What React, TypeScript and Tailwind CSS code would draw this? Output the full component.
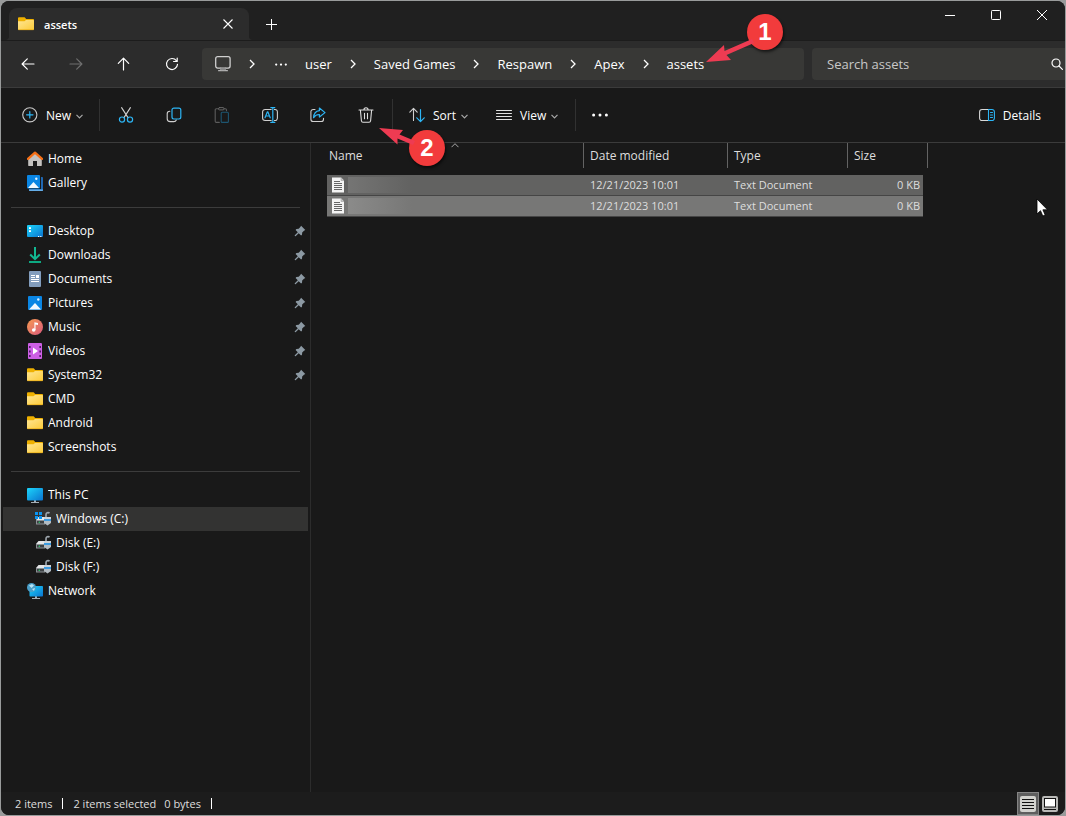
import { useState } from "react";
import type { ReactNode } from "react";

interface SidebarItem {
  label: string;
  icon: ReactNode;
  pinned?: boolean;
  nested?: boolean;
  active?: boolean;
}

interface FileRow {
  id: number;
  modified: string;
  type: string;
  size: string;
}

const BLUE = "#2cb5f5";

const Icon = ({ children, className = "size-4" }: { children: ReactNode; className?: string }) => (
  <svg
    viewBox="0 0 16 16"
    className={`${className} shrink-0`}
    fill="none"
    stroke="currentColor"
    strokeLinecap="round"
    strokeLinejoin="round"
    aria-hidden="true"
  >
    {children}
  </svg>
);

/* Toolbar and navigation glyphs */

const ArrowLeft = () => (
  <Icon><path d="M14 8H2.2M7.3 2.8 2.1 8l5.2 5.2" strokeWidth="1.2" /></Icon>
);
const ArrowRight = () => (
  <Icon><path d="M2 8h11.8M8.7 2.8 13.9 8l-5.2 5.2" strokeWidth="1.2" /></Icon>
);
const ArrowUp = () => (
  <Icon><path d="M7.500 14V2.2M2.300 7.3 7.500 2.1l5.2 5.2" strokeWidth="1.2" /></Icon>
);
const Refresh = () => (
  <Icon>
    <path d="M13.5 8.3A5.5 5.5 0 1 1 12.4 4.7" strokeWidth="1.2" />
    <path d="M13.2 2v3.5H9.6" strokeWidth="1.2" />
  </Icon>
);
const Monitor = () => (
  <Icon>
    <rect x="0.7" y="0.7" width="14.4" height="11.4" rx="2" strokeWidth="1.3" stroke="#cfcfcf" />
    <path d="M5.7 12v2.5M10.3 12v2.5M3.6 14.7h8.8" strokeWidth="1.2" stroke="#b5b5b5" />
    <path d="M6 13.3h4" strokeWidth="2" stroke="#888" />
  </Icon>
);
const CrumbChevron = () => (
  <span className="flex w-[42px] shrink-0 justify-center text-white">
    <svg viewBox="0 0 6 10" className="h-[10px] w-[6px]" fill="none" stroke="currentColor" strokeWidth="1.3" aria-hidden="true">
      <path d="m1 1 4 4-4 4" />
    </svg>
  </span>
);
const ChevronDown = () => (
  <svg viewBox="0 0 7 5" className="h-[5px] w-[7px] shrink-0 text-[#a8a8a8]" fill="none" stroke="currentColor" strokeWidth="1.2" aria-hidden="true">
    <path d="m0.5 0.8 3 3 3-3" />
  </svg>
);
const Dots = ({ className }: { className: string }) => (
  <svg viewBox="0 0 16 4" className={className} fill="currentColor" aria-hidden="true">
    <circle cx="1.6" cy="2" r="1.5" />
    <circle cx="8" cy="2" r="1.5" />
    <circle cx="14.4" cy="2" r="1.5" />
  </svg>
);
const SearchIcon = () => (
  <svg viewBox="0 0 12 12" className="size-3 shrink-0" fill="none" stroke="currentColor" strokeWidth="1.2" strokeLinecap="round" aria-hidden="true">
    <circle cx="5" cy="5" r="4" />
    <path d="m8 8 3.4 3.4" />
  </svg>
);
const PlusCircle = () => (
  <Icon>
    <circle cx="7.8" cy="7.8" r="7.1" stroke="#c8c8c8" strokeWidth="1.1" />
    <path d="M7.8 4.6v6.4M4.6 7.8H11" stroke={BLUE} strokeWidth="1.2" />
  </Icon>
);
const Cut = () => (
  <Icon>
    <path d="M3.6.6 10 10.6M12.4.6 6 10.6" stroke="#d0d0d0" strokeWidth="1.1" />
    <circle cx="4" cy="12.6" r="2.6" stroke={BLUE} strokeWidth="1.2" />
    <circle cx="12" cy="12.6" r="2.6" stroke={BLUE} strokeWidth="1.2" />
  </Icon>
);
const Copy = () => (
  <Icon>
    <path d="M3.8 4.2C2 4.3 1.2 5 1.2 6.8v4.9c0 2 1 2.9 3 2.9h3.6c1.3 0 2.1-.5 2.5-1.6" stroke="#d0d0d0" strokeWidth="1.1" />
    <rect x="6" y="1.2" width="8.8" height="10.8" rx="1.9" stroke={BLUE} strokeWidth="1.2" />
  </Icon>
);
const Paste = () => (
  <Icon>
    <path d="M4.5 1.8H2.3c-.7 0-1.1.4-1.1 1.1v11.4c0 .7.4 1.1 1.1 1.1h3M10 1.8h1.4c.7 0 1.1.4 1.1 1.1v.8" stroke="#5c5c5c" strokeWidth="1.1" />
    <rect x="4.5" y="0.6" width="5.6" height="2.3" rx="1.1" stroke="#666" />
    <rect x="7.2" y="5.2" width="7.2" height="10.2" rx="1" stroke="#1d5570" strokeWidth="1.1" />
  </Icon>
);
const Rename = () => (
  <Icon>
    <path d="M9.2 2.5H3.1A2.5 2.5 0 0 0 .6 5v6a2.5 2.5 0 0 0 2.5 2.5h6.1M12.4 2.5h.6A2.4 2.4 0 0 1 15.4 5v6a2.4 2.4 0 0 1-2.4 2.5h-.6" stroke="#d0d0d0" strokeWidth="1.1" />
    <path d="m3 10.8 2.4-6h.4l2.4 6M3.9 9h3.4" stroke={BLUE} strokeWidth="1.2" />
    <path d="M10.8.6v14.8M8.8.6h4M8.8 15.4h4" stroke={BLUE} strokeWidth="1.2" />
  </Icon>
);
const Share = () => (
  <Icon>
    <path d="M5 2.5H3.2A2.3 2.3 0 0 0 .9 4.8v7.4a2.3 2.3 0 0 0 2.3 2.3h8a2.3 2.3 0 0 0 2.3-2.3v-1" stroke="#d0d0d0" strokeWidth="1.1" />
    <path d="M9.4 1 15 5.6 9.4 10V7.5C6.7 7.4 5 8.4 3.6 10.7c.2-4 2.3-6.6 5.8-7z" stroke={BLUE} strokeWidth="1.2" />
  </Icon>
);
const Trash = () => (
  <Icon>
    <path d="M1 3h14M5.9 2.9a2.1 2.1 0 0 1 4.2 0M2.4 3.2l1 10.6c.1.9.7 1.5 1.6 1.5h6c.9 0 1.5-.6 1.6-1.5l1-10.6M6.5 6.2v5.6M9.5 6.2v5.6" stroke="#dedede" strokeWidth="1.1" />
  </Icon>
);
const Sort = () => (
  <Icon>
    <path d="M4.5 13.5v-12M.8 5.2l3.7-3.8 3.7 3.8" stroke="#d0d0d0" strokeWidth="1.1" />
    <path d="M11.5 2.5v12M7.8 10.8l3.7 3.8 3.7-3.8" stroke={BLUE} strokeWidth="1.2" />
  </Icon>
);
const ViewLines = () => (
  <Icon><path d="M.5 3.5h15M.5 6.5h15M.5 9.5h15M.5 12.5h15" stroke="#e2e2e2" /></Icon>
);
const DetailsPane = () => (
  <Icon>
    <path d="M10 2.5H3A2.4 2.4 0 0 0 .6 4.9v6.2A2.4 2.4 0 0 0 3 13.5h7" stroke="#d8d8d8" strokeWidth="1.1" />
    <path d="M9.5 2.5H13a2.4 2.4 0 0 1 2.4 2.4v6.2a2.4 2.4 0 0 1-2.4 2.4H9.5zM11.5 5.5h2M11.5 8h2M11.5 10.5h2" stroke={BLUE} strokeWidth="1.1" />
  </Icon>
);

/* Coloured shell icons */

const Folder = () => (
  <svg viewBox="0 0 16 16" className="size-4 shrink-0" aria-hidden="true">
    <defs>
      <linearGradient id="folderFront" x1="0" y1="0" x2="1" y2="1">
        <stop offset="0" stopColor="#ffe694" />
        <stop offset="1" stopColor="#fccb38" />
      </linearGradient>
    </defs>
    <path d="M0 2.5C0 1.7.5 1.2 1.2 1.2h4.6c.5 0 .8.1 1.1.4L8.200 3H15c.6 0 1 .4 1 1v8H0z" fill="#eeb000" />
    <path d="M0 5.2h6.5L8 4h7c.6 0 1 .4 1 1v8c0 .6-.4 1-1 1H1c-.6 0-1-.4-1-1z" fill="url(#folderFront)" />
    <path d="M.4 13.7h15.2" stroke="#e8ab10" strokeWidth=".7" />
  </svg>
);
const HomeIcon = () => (
  <svg viewBox="0 0 16 16" className="size-4 shrink-0" aria-hidden="true">
    <path d="M1.2 7 8 1.5 14.8 7v7.500c0 .3-.2.5-.5.5H10v-5H6v5H1.700c-.3 0-.5-.2-.5-.5z" fill="#c4c2c0" />
    <path d="m1 7.900 7-6.300 7 6.300" fill="none" stroke="#f56f16" strokeWidth="2.3" strokeLinecap="round" strokeLinejoin="round" />
  </svg>
);
const PictureIcon = ({ stacked = false }: { stacked?: boolean }) => (
  <svg viewBox="0 0 16 16" className="size-4 shrink-0" aria-hidden="true">
    {stacked && <path d="M14 2h1c.6 0 1 .4 1 1v12c0 .6-.4 1-1 1H3c-.6 0-1-.4-1-1v-1h12z" fill="#1f67b2" />}
    {stacked && <path d="M2 14.4h14v.6c0 .6-.4 1-1 1H3c-.6 0-1-.4-1-1z" fill="#65aee8" />}
    <rect x={stacked ? 0 : 1} y={stacked ? 0 : 1} width={stacked ? 13 : 14} height={stacked ? 13.5 : 14} rx="1" fill="#0a86e4" />
    <path d={stacked ? "M1 13 6.500 7l5.500 6z" : "M2 14.500 8 8l6 6.500z"} fill="#f2f9ff" />
    <circle cx={stacked ? 9.3 : 11.3} cy={stacked ? 3.7 : 4.5} r="1.2" fill="#dff1ff" />
  </svg>
);
const DesktopIcon = () => (
  <svg viewBox="0 0 16 16" className="size-4 shrink-0" aria-hidden="true">
    <defs>
      <linearGradient id="desk" x1="0" y1="0" x2="1" y2="1">
        <stop offset="0" stopColor="#1cd5fb" />
        <stop offset="1" stopColor="#0a73cf" />
      </linearGradient>
    </defs>
    <rect y="2" width="16" height="12" rx="1" fill="url(#desk)" />
    <path d="M2 4.300h2v1.700H2zM2 7.300h2v1.700H2zM11 13h1.200v1H11zM13.200 13h1.200v1h-1.200z" fill="#fff" />
  </svg>
);
const DownloadIcon = () => (
  <svg viewBox="0 0 16 16" className="size-4 shrink-0" fill="none" stroke="#12b892" strokeWidth="2" aria-hidden="true">
    <path d="M8 0v12M3.200 7.500 8 12.200l4.800-4.700" />
    <path d="M2 15h12" stroke="#0da982" />
  </svg>
);
const DocumentIcon = () => (
  <svg viewBox="0 0 16 16" className="size-4 shrink-0" aria-hidden="true">
    <rect x="2" width="12" height="16" rx="1" fill="#829dbd" />
    <path d="M4 4.500h4M4 6.500h4M4 8.500h8M4 10.500h8" stroke="#fff" />
    <path d="M9 4h3v3H9z" fill="#fff" />
  </svg>
);
const MusicIcon = () => (
  <svg viewBox="0 0 16 16" className="size-4 shrink-0" aria-hidden="true">
    <defs>
      <linearGradient id="music" x1="0" y1="0" x2="1" y2="1">
        <stop offset="0" stopColor="#f79a50" />
        <stop offset="1" stopColor="#d9597c" />
      </linearGradient>
    </defs>
    <circle cx="8" cy="8" r="8" fill="url(#music)" />
    <circle cx="6.7" cy="11" r="1.8" fill="#fff" />
    <path d="M7.400 3.300 11 4v2L8.500 5.600V11H7.400z" fill="#fff" />
  </svg>
);
const VideoIcon = () => (
  <svg viewBox="0 0 16 16" className="size-4 shrink-0" aria-hidden="true">
    <rect x="1" width="14" height="16" rx="1" fill="#cd5fe4" />
    <path d="M2.800 3v11M13.200 3v11" stroke="#4f1d63" strokeWidth="1.6" strokeDasharray="2 2.500" />
    <path d="M6 4.500 11 8l-5 3.500z" fill="#fff" />
  </svg>
);
const PcIcon = () => (
  <svg viewBox="0 0 16 16" className="size-4 shrink-0" aria-hidden="true">
    <path d="M7 13h2v2h3v1H4v-1h3z" fill="#a3adb5" />
    <rect y="1" width="16" height="12.5" rx="1" fill="url(#desk)" />
  </svg>
);
const DiskIcon = ({ system = false }: { system?: boolean }) => (
  <svg viewBox="0 0 16 16" className="size-4 shrink-0" aria-hidden="true">
    <path d="M3.500 6H10v3H1z" fill="#e4e6e8" />
    <path d="M1 9h9v4.500H1z" fill="#8c9195" />
    <path d="M2 10h7v2.500H2z" fill="#3d4144" />
    <circle cx="4.300" cy="11.300" r=".8" fill="#30d070" />
    <path d="M11 6.500V3.700a2 2 0 0 1 3.500-1.400" fill="none" stroke="#9ea7ae" strokeWidth="1.600" />
    <path d="M9 6h7v2.500H9z" fill="#cdd3d8" />
    <path d="M9 8h7v2H9z" fill="#3c9be0" />
    <path d="M9 10h7v2l-3.500 2.500L9 12z" fill="#b4bcc3" />
    {system && <path d="M0 1h3v3H0zM4 1h3v3H4zM0 5h3v3H0zM4 5h3v3H4z" fill="#0a95f2" />}
  </svg>
);
const NetworkIcon = () => (
  <svg viewBox="0 0 16 16" className="size-4 shrink-0" aria-hidden="true">
    <path d="M8 13h2v2h3v1H5v-1h3z" fill="#a3adb5" />
    <rect x="2.500" y="3" width="13.500" height="10.500" rx=".8" fill="url(#desk)" />
    <circle cx="4.500" cy="4.500" r="4.500" fill="#4a9fc9" />
    <path d="M2 2.500 5 1l2 1.500L4.500 5zM5 6l3-1-1 3z" fill="#b6e4f5" />
  </svg>
);
const Pin = () => (
  <svg viewBox="0 0 12 12" className="size-3 shrink-0" fill="#8c99a3" aria-hidden="true">
    <path d="M7.100.7 11.300 4.900 10 5.700l-1.800 1.700-.2 2.300-.9.900L4.700 8.200 1.600 11.200l-.9-.1.100-.8 3-3L1.600 5l.8-.9 2.300-.3L6.300 2z" />
  </svg>
);
const TextFile = () => (
  <svg viewBox="0 0 12 16" className="h-4 w-3 shrink-0" aria-hidden="true">
    <path d="M0 .5h9L12 3.500V15.500H0z" fill="#f4f4f4" />
    <path d="M2 4.500h6M2 6.500h8M2 8.500h8M2 10.500h8M2 12.500h8" stroke="#666" />
    <path d="M9 .5v3h3" fill="#c4c4c4" stroke="#999" strokeWidth=".5" />
  </svg>
);

const quickLinks: SidebarItem[] = [
  { label: "Home", icon: <HomeIcon /> },
  { label: "Gallery", icon: <PictureIcon stacked /> },
];

const folders: SidebarItem[] = [
  { label: "Desktop", icon: <DesktopIcon />, pinned: true },
  { label: "Downloads", icon: <DownloadIcon />, pinned: true },
  { label: "Documents", icon: <DocumentIcon />, pinned: true },
  { label: "Pictures", icon: <PictureIcon />, pinned: true },
  { label: "Music", icon: <MusicIcon />, pinned: true },
  { label: "Videos", icon: <VideoIcon />, pinned: true },
  { label: "System32", icon: <Folder />, pinned: true },
  { label: "CMD", icon: <Folder /> },
  { label: "Android", icon: <Folder /> },
  { label: "Screenshots", icon: <Folder /> },
];

const devices: SidebarItem[] = [
  { label: "This PC", icon: <PcIcon /> },
  { label: "Windows (C:)", icon: <DiskIcon system />, nested: true, active: true },
  { label: "Disk (E:)", icon: <DiskIcon />, nested: true },
  { label: "Disk (F:)", icon: <DiskIcon />, nested: true },
  { label: "Network", icon: <NetworkIcon /> },
];

const crumbs = ["user", "Saved Games", "Respawn", "Apex", "assets"];

const files: FileRow[] = [
  { id: 1, modified: "12/21/2023 10:01", type: "Text Document", size: "0 KB" },
  { id: 2, modified: "12/21/2023 10:01", type: "Text Document", size: "0 KB" },
];

const fileActions = [
  { label: "Cut", icon: <Cut /> },
  { label: "Copy", icon: <Copy /> },
  { label: "Paste", icon: <Paste />, disabled: true },
  { label: "Rename", icon: <Rename /> },
  { label: "Share", icon: <Share /> },
  { label: "Delete", icon: <Trash /> },
];

function SidebarGroup({ items }: { items: SidebarItem[] }) {
  return (
    <ul>
      {items.map((item) => (
        <li key={item.label} className="pr-[2px] pl-[2px]">
          <a
            href="#"
            className={`flex h-6 items-center gap-[5px] pr-[2px] ${item.nested ? "pl-8" : "pl-6"} ${
              item.active ? "bg-[#333332]" : "hover:bg-[#262626]"
            }`}
          >
            {item.icon}
            <span className="flex-1 truncate">{item.label}</span>
            {item.pinned && <Pin />}
          </a>
        </li>
      ))}
    </ul>
  );
}

const SidebarRule = () => (
  <div className="flex h-6 items-center px-[10px]">
    <hr className="w-full border-[#3c3c3c]" />
  </div>
);

const Divider = () => <span className="h-8 w-px shrink-0 bg-[#313131]" />;

const StepBadge = ({ step }: { step: number }) => (
  <span className="flex size-9 items-center justify-center rounded-full bg-[#f23b3c] font-['Liberation_Sans',sans-serif] text-2xl font-bold text-white shadow-[1px_2px_3px_rgba(0,0,0,0.6)]">
    {step}
  </span>
);

export default function App() {
  const [search, setSearch] = useState("");

  return (
    <div className="h-screen bg-[#999b9b] p-px font-['Open_Sans','Noto_Sans',sans-serif] text-xs text-white">
      <div className="relative flex h-full flex-col overflow-hidden rounded-lg bg-[#191919]">
        <header className="flex h-10 shrink-0 items-end border-b border-[#1c1c1c] bg-[#202020]">
          <div className="relative ml-2 flex h-8 w-[240px] items-center rounded-t-lg bg-[#2c2c2c] pr-[15px] pl-[9px]">
            <Folder />
            <span className="ml-[10px] flex-1 pt-[2px] text-[11px] font-semibold">assets</span>
            <button aria-label="Close tab" className="flex size-3 items-center justify-center">
              <svg viewBox="0 0 10 10" className="size-[10px]" stroke="currentColor" strokeWidth="1.1">
                <path d="m.5.5 9 9M9.500.5l-9 9" />
              </svg>
            </button>
            <svg viewBox="0 0 4 4" className="absolute bottom-0 -left-1 size-1" fill="#2c2c2c"><path d="M4 0v4H0a4 4 0 0 0 4-4" /></svg>
            <svg viewBox="0 0 4 4" className="absolute -right-1 bottom-0 size-1" fill="#2c2c2c"><path d="M0 0v4h4a4 4 0 0 1-4-4" /></svg>
          </div>
          <button aria-label="New tab" className="flex h-8 w-11 items-center justify-center">
            <svg viewBox="0 0 11 11" className="size-[11px]" stroke="currentColor"><path d="M5.500 0v11M0 5.500h11" /></svg>
          </button>
          <div className="ml-auto flex self-start">
            <button aria-label="Minimize" className="flex h-7 w-[46px] items-center justify-center">
              <svg viewBox="0 0 10 10" className="size-[10px]" stroke="currentColor"><path d="M0 5.500h10" /></svg>
            </button>
            <button aria-label="Maximize" className="flex h-7 w-[46px] items-center justify-center">
              <svg viewBox="0 0 10 10" className="size-[10px]" fill="none" stroke="currentColor"><rect x=".5" y=".5" width="9" height="9" rx=".8" /></svg>
            </button>
            <button aria-label="Close" className="flex h-7 w-[46px] items-center justify-center">
              <svg viewBox="0 0 10 10" className="size-[10px]" stroke="currentColor"><path d="m0 0 10 10M10 0 0 10" /></svg>
            </button>
          </div>
        </header>

        <div className="flex h-[47px] shrink-0 items-center border-b border-[#3b3b3b] bg-[#2c2c2c] pl-[3px]">
          <div className="flex shrink-0">
            <button aria-label="Back" className="flex h-8 w-12 items-center justify-center"><ArrowLeft /></button>
            <button aria-label="Forward" disabled className="flex h-8 w-12 items-center justify-center text-[#6e6e6e]"><ArrowRight /></button>
            <button aria-label="Up" className="flex h-8 w-12 items-center justify-center"><ArrowUp /></button>
            <button aria-label="Refresh" className="flex h-8 w-12 items-center justify-center"><Refresh /></button>
          </div>
          <nav aria-label="Address" className="ml-[6px] flex h-8 min-w-0 flex-1 items-center rounded bg-[#383836] pl-[13px] text-[13px]">
            <Monitor />
            <CrumbChevron />
            <button aria-label="More folders" className="mr-4 flex w-4 shrink-0 justify-center">
              <Dots className="h-[3px] w-3" />
            </button>
            {crumbs.map((crumb, i) => (
              <span key={crumb} className="flex items-center">
                {i > 0 && <CrumbChevron />}
                <button className="pt-[2px] whitespace-nowrap">{crumb}</button>
              </span>
            ))}
          </nav>
          <label className="ml-2 flex h-8 w-[253px] shrink-0 items-center rounded-l bg-[#383836] pr-[2px] pl-[15px]">
            <input
              type="text"
              aria-label="Search assets"
              placeholder="Search assets"
              value={search}
              onChange={(e) => setSearch(e.target.value)}
              className="min-w-0 flex-1 bg-transparent pt-[2px] text-[13px] outline-none placeholder:text-[#c8c8c8]"
            />
            <SearchIcon />
          </label>
        </div>

        <div role="toolbar" className="flex h-[55px] shrink-0 items-center border-b border-[#3b3b3b]">
          <button className="flex h-8 w-[98px] items-center gap-2 pl-[21px]">
            <PlusCircle />
            <span className="flex items-center gap-[5px] pt-[2px]">New <ChevronDown /></span>
          </button>
          <Divider />
          <div className="mx-[2px] flex">
            {fileActions.map((action) => (
              <button
                key={action.label}
                aria-label={action.label}
                disabled={action.disabled}
                className="flex h-8 w-12 items-center justify-center"
              >
                {action.icon}
              </button>
            ))}
          </div>
          <Divider />
          <button className="flex h-8 w-[87px] items-center gap-2 pl-4">
            <Sort />
            <span className="flex items-center gap-[5px] pt-[2px]">Sort <ChevronDown /></span>
          </button>
          <button className="flex h-8 w-[95px] items-center gap-2 pl-4">
            <ViewLines />
            <span className="flex items-center gap-[5px] pt-[2px]">View <ChevronDown /></span>
          </button>
          <Divider />
          <button aria-label="See more" className="flex h-8 w-12 items-center justify-center">
            <Dots className="h-1 w-4" />
          </button>
          <button className="mr-6 ml-auto flex h-8 items-center gap-2">
            <DetailsPane />
            <span className="pt-[2px]">Details</span>
          </button>
        </div>

        <div className="flex min-h-0 flex-1">
          <aside className="w-[310px] shrink-0 overflow-hidden border-r border-[#2c2c2c] pt-1">
            <SidebarGroup items={quickLinks} />
            <SidebarRule />
            <SidebarGroup items={folders} />
            <SidebarRule />
            <SidebarGroup items={devices} />
          </aside>

          <main className="min-w-0 flex-1 overflow-hidden pl-4">
            <table className="w-[601px] table-fixed border-separate border-spacing-0 text-left text-[#dedede]">
              <colgroup>
                <col className="w-[257px]" />
                <col className="w-[144px]" />
                <col className="w-[120px]" />
                <col className="w-[75px]" />
                <col className="w-[5px]" />
              </colgroup>
              <thead>
                <tr className="h-[25px]">
                  <th className="relative border-r border-[#636363] p-0 pl-[2px] font-normal">
                    Name
                    <svg viewBox="0 0 8 5" className="absolute top-0 left-1/2 h-[5px] w-2 -translate-x-1/2" fill="none" stroke="#a8a8a8">
                      <path d="m.5 4.200 3.500-3.500 3.500 3.500" />
                    </svg>
                  </th>
                  <th className="border-r border-[#636363] p-0 pl-[6px] font-normal">Date modified</th>
                  <th className="border-r border-[#636363] p-0 pl-[6px] font-normal">Type</th>
                  <th colSpan={2} className="border-r border-[#636363] p-0 pl-[6px] font-normal">Size</th>
                </tr>
                <tr className="h-[7px]" aria-hidden="true"><td colSpan={5} className="p-0" /></tr>
              </thead>
              <tbody className="text-[11px]">
                {files.map((file, i) => (
                  <tr key={file.id} className={`h-[21px] leading-5 ${i === 0 ? "[&>.cell]:bg-[#626261]" : "[&>.cell]:bg-[#777776]"}`}>
                    <td className="cell border-b border-[#454545] p-0 pl-[5px]">
                      <span className="flex items-center gap-1">
                        <TextFile />
                        {/* file name is redacted */}
                        <span className={`h-4 w-16 bg-linear-to-r ${i === 0 ? "from-[#757574] to-[#626261]" : "from-[#8b8b8a] to-[#777776]"}`} />
                      </span>
                    </td>
                    <td className="cell border-b border-[#454545] p-0 pl-[6px] whitespace-nowrap">{file.modified}</td>
                    <td className="cell border-b border-[#454545] p-0 pl-[6px] whitespace-nowrap">{file.type}</td>
                    <td className="cell border-b border-[#454545] p-0 pr-[3px] text-right whitespace-nowrap">{file.size}</td>
                    <td className="p-0" />
                  </tr>
                ))}
              </tbody>
            </table>
          </main>
        </div>

        <footer className="flex h-[23px] shrink-0 items-center bg-[#1c1c1c] pl-[14px] text-[11px] text-[#dedede]">
          <span className="pt-[2px]">2 items</span>
          <span className="mx-[10px] h-[11px] w-px bg-white" />
          <span className="pt-[2px]">2 items selected</span>
          <span className="ml-2 pt-[2px]">0 bytes</span>
          <span className="mx-[10px] h-[11px] w-px bg-white" />
          <div className="mr-[7px] ml-auto flex items-center gap-[3px]">
            <button aria-label="Details view" className="flex h-[23px] w-[22px] items-center justify-center border border-[#858585] bg-[#5e5e5e]">
              <svg viewBox="0 0 16 16" className="size-4"><rect width="16" height="16" rx="2" fill="#d2d2ce" /><path d="M2 3.500h12M2 6.500h12M2 9.500h12M2 12.500h12" stroke="#111" /></svg>
            </button>
            <button aria-label="Thumbnail view" className="size-4">
              <svg viewBox="0 0 16 16" className="size-4"><rect width="16" height="16" rx="2" fill="#b9b9b7" /><rect x="2.500" y="2.500" width="11" height="8.500" fill="#fff" stroke="#111" /><path d="M2 13.500h12" stroke="#111" /></svg>
            </button>
          </div>
        </footer>

        {/* Step markers and pointer drawn over the window */}
        <div className="absolute top-[13px] left-[705px]">
          <svg viewBox="0 0 48 50" className="absolute top-0 left-0 h-[50px] w-12" fill="#ee3b52">
            <path d="M0 48 18 31 18.500 37 46 25 48 29 20.500 41 25 46z" />
          </svg>
          <div className="pl-[41px]"><StepBadge step={1} /></div>
        </div>
        <div className="absolute top-[127px] left-[378px]">
          <svg viewBox="0 0 40 24" className="absolute top-0 left-0 h-6 w-10" fill="#ee3b52">
            <path d="M0 0 24 2 20.500 6.500 36 13 34 17 18.500 10.500 18.500 16.500z" />
          </svg>
          <div className="pt-[2px] pl-[30px]"><StepBadge step={2} /></div>
        </div>
        <svg viewBox="0 0 12 19" className="absolute top-[197px] left-[1035px] h-[19px] w-3" aria-hidden="true">
          <path d="M1 1v15l3.500-3.300 2.300 5.300 2.400-1-2.300-5.200h4.600z" fill="#fff" stroke="#000" strokeWidth=".8" />
        </svg>
      </div>
    </div>
  );
}
